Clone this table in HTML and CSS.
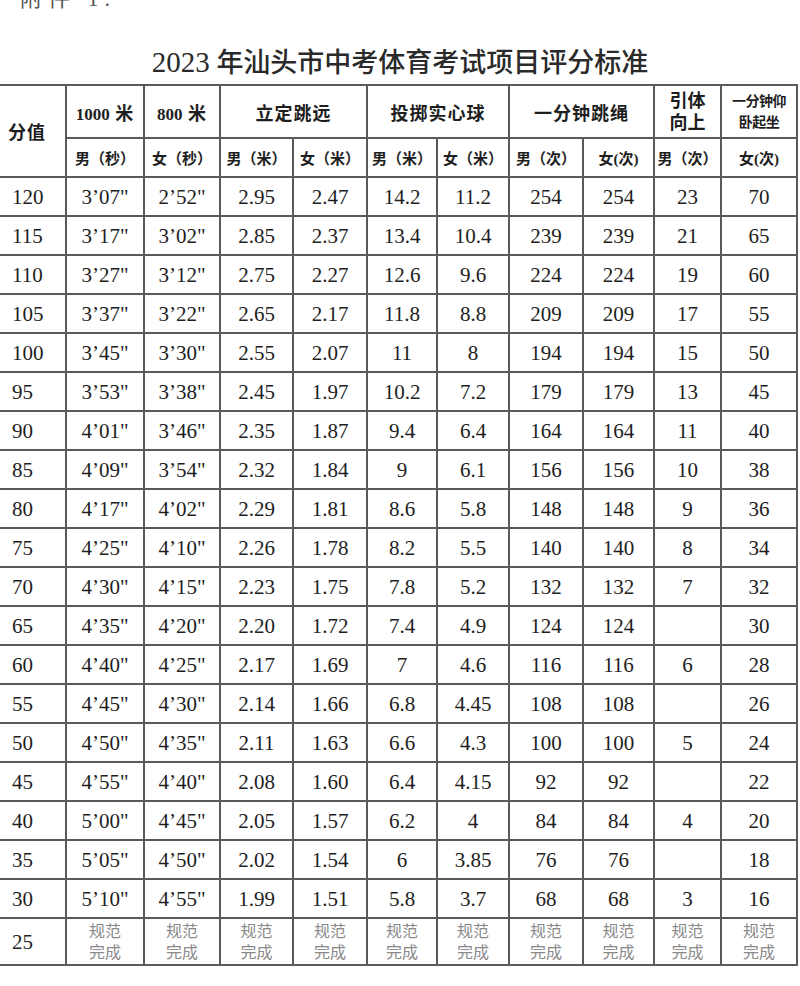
FILE: index.html
```html
<!DOCTYPE html>
<html lang="zh-CN">
<head>
<meta charset="utf-8">
<title>2023年汕头市中考体育考试项目评分标准</title>
<link rel="stylesheet" href="styles.css">
</head>
<body>
<div class="page">
  <div class="attach"><span class="attach-text">附件 1.</span></div>
  <h1 class="title"><span class="num">2023</span> 年汕头市中考体育考试项目评分标准</h1>
  <table class="score">
    <colgroup>
      <col style="width:66px"><col style="width:78px"><col style="width:76px"><col style="width:73px"><col style="width:74px"><col style="width:70px"><col style="width:72px"><col style="width:74px"><col style="width:71px"><col style="width:67px"><col style="width:76px">
    </colgroup>
    <thead>
      <tr class="h1">
        <th rowspan="2" class="first">分值</th>
        <th><span class="num">1000</span> 米</th>
        <th><span class="num">800</span> 米</th>
        <th colspan="2">立定跳远</th>
        <th colspan="2">投掷实心球</th>
        <th colspan="2">一分钟跳绳</th>
        <th class="two">引体<br>向上</th>
        <th class="two small">一分钟仰<br>卧起坐</th>
      </tr>
      <tr class="h2">
        <th>男（秒）</th>
        <th>女（秒）</th>
        <th>男（米）</th>
        <th>女（米）</th>
        <th>男（米）</th>
        <th>女（米）</th>
        <th>男（次）</th>
        <th>女(次)</th>
        <th>男（次）</th>
        <th>女(次)</th>
      </tr>
    </thead>
    <tbody>
      <tr><td class="first">120</td><td>3’07"</td><td>2’52"</td><td>2.95</td><td>2.47</td><td>14.2</td><td>11.2</td><td>254</td><td>254</td><td>23</td><td>70</td></tr>
      <tr><td class="first">115</td><td>3’17"</td><td>3’02"</td><td>2.85</td><td>2.37</td><td>13.4</td><td>10.4</td><td>239</td><td>239</td><td>21</td><td>65</td></tr>
      <tr><td class="first">110</td><td>3’27"</td><td>3’12"</td><td>2.75</td><td>2.27</td><td>12.6</td><td>9.6</td><td>224</td><td>224</td><td>19</td><td>60</td></tr>
      <tr><td class="first">105</td><td>3’37"</td><td>3’22"</td><td>2.65</td><td>2.17</td><td>11.8</td><td>8.8</td><td>209</td><td>209</td><td>17</td><td>55</td></tr>
      <tr><td class="first">100</td><td>3’45"</td><td>3’30"</td><td>2.55</td><td>2.07</td><td>11</td><td>8</td><td>194</td><td>194</td><td>15</td><td>50</td></tr>
      <tr><td class="first">95</td><td>3’53"</td><td>3’38"</td><td>2.45</td><td>1.97</td><td>10.2</td><td>7.2</td><td>179</td><td>179</td><td>13</td><td>45</td></tr>
      <tr><td class="first">90</td><td>4’01"</td><td>3’46"</td><td>2.35</td><td>1.87</td><td>9.4</td><td>6.4</td><td>164</td><td>164</td><td>11</td><td>40</td></tr>
      <tr><td class="first">85</td><td>4’09"</td><td>3’54"</td><td>2.32</td><td>1.84</td><td>9</td><td>6.1</td><td>156</td><td>156</td><td>10</td><td>38</td></tr>
      <tr><td class="first">80</td><td>4’17"</td><td>4’02"</td><td>2.29</td><td>1.81</td><td>8.6</td><td>5.8</td><td>148</td><td>148</td><td>9</td><td>36</td></tr>
      <tr><td class="first">75</td><td>4’25"</td><td>4’10"</td><td>2.26</td><td>1.78</td><td>8.2</td><td>5.5</td><td>140</td><td>140</td><td>8</td><td>34</td></tr>
      <tr><td class="first">70</td><td>4’30"</td><td>4’15"</td><td>2.23</td><td>1.75</td><td>7.8</td><td>5.2</td><td>132</td><td>132</td><td>7</td><td>32</td></tr>
      <tr><td class="first">65</td><td>4’35"</td><td>4’20"</td><td>2.20</td><td>1.72</td><td>7.4</td><td>4.9</td><td>124</td><td>124</td><td></td><td>30</td></tr>
      <tr><td class="first">60</td><td>4’40"</td><td>4’25"</td><td>2.17</td><td>1.69</td><td>7</td><td>4.6</td><td>116</td><td>116</td><td>6</td><td>28</td></tr>
      <tr><td class="first">55</td><td>4’45"</td><td>4’30"</td><td>2.14</td><td>1.66</td><td>6.8</td><td>4.45</td><td>108</td><td>108</td><td></td><td>26</td></tr>
      <tr><td class="first">50</td><td>4’50"</td><td>4’35"</td><td>2.11</td><td>1.63</td><td>6.6</td><td>4.3</td><td>100</td><td>100</td><td>5</td><td>24</td></tr>
      <tr><td class="first">45</td><td>4’55"</td><td>4’40"</td><td>2.08</td><td>1.60</td><td>6.4</td><td>4.15</td><td>92</td><td>92</td><td></td><td>22</td></tr>
      <tr><td class="first">40</td><td>5’00"</td><td>4’45"</td><td>2.05</td><td>1.57</td><td>6.2</td><td>4</td><td>84</td><td>84</td><td>4</td><td>20</td></tr>
      <tr><td class="first">35</td><td>5’05"</td><td>4’50"</td><td>2.02</td><td>1.54</td><td>6</td><td>3.85</td><td>76</td><td>76</td><td></td><td>18</td></tr>
      <tr><td class="first">30</td><td>5’10"</td><td>4’55"</td><td>1.99</td><td>1.51</td><td>5.8</td><td>3.7</td><td>68</td><td>68</td><td>3</td><td>16</td></tr>
      <tr class="last"><td class="first">25</td><td class="done">规范<br>完成</td><td class="done">规范<br>完成</td><td class="done">规范<br>完成</td><td class="done">规范<br>完成</td><td class="done">规范<br>完成</td><td class="done">规范<br>完成</td><td class="done">规范<br>完成</td><td class="done">规范<br>完成</td><td class="done">规范<br>完成</td><td class="done">规范<br>完成</td></tr>
    </tbody>
  </table>
</div>
</body>
</html>
```
FILE: styles.css
```css
html, body {
  margin: 0;
  padding: 0;
  background: #ffffff;
}

body {
  font-family: "Liberation Serif", "Noto Sans CJK SC", serif;
  color: #222222;
}

.page {
  width: 800px;
  height: 986px;
  overflow: hidden;
}

.attach {
  height: 10px;
  overflow: hidden;
  padding-left: 20px;
}

.attach-text {
  display: block;
  margin-top: -12px;
  font-family: "Liberation Serif", "Noto Sans CJK SC", serif;
  font-size: 22px;
  line-height: 22px;
  color: #555555;
  letter-spacing: 6px;
}

.title {
  margin: 0;
  padding-top: 32px;
  height: 42px;
  text-align: center;
  font-family: "Liberation Serif", "Noto Sans CJK SC", serif;
  font-weight: 500;
  font-size: 27px;
  line-height: 40px;
  color: #2a2a2a;
  letter-spacing: 0;
}

.title .num {
  font-size: 29px;
  letter-spacing: 0;
}

.score {
  border-collapse: collapse;
  table-layout: fixed;
  width: 798px;
  margin: 0;
}

.score th,
.score td {
  border: 2px solid #5a5a5a;
  text-align: center;
  vertical-align: middle;
  padding: 0;
}

.score th.first,
.score td.first {
  border-left: none;
  text-align: left;
  padding-left: 12px;
}

.score th {
  font-family: "Liberation Serif", "Noto Sans CJK SC", sans-serif;
  font-weight: 700;
  color: #1e1e1e;
}

.h1 th {
  height: 51px;
  font-size: 18px;
  letter-spacing: 1px;
}

.h1 th .num {
  font-size: 17px;
  letter-spacing: 0;
}

.h1 th.first {
  font-size: 18px;
  padding-left: 8px;
}

.h1 th.two {
  line-height: 22px;
  font-size: 18px;
  letter-spacing: 0;
}

.h1 th.two.small {
  font-size: 14px;
  line-height: 21px;
  letter-spacing: -0.5px;
}

.h2 th {
  height: 37px;
  font-size: 15px;
  letter-spacing: 0;
}

.score td {
  height: 37px;
  font-size: 21px;
  line-height: 24px;
  color: #1e1e1e;
}

.score tr.last td {
  height: 45px;
}

.score td.done {
  font-family: "Liberation Serif", "Noto Sans CJK SC", serif;
  font-size: 16px;
  line-height: 21px;
  color: #8a8a8a;
}
```
